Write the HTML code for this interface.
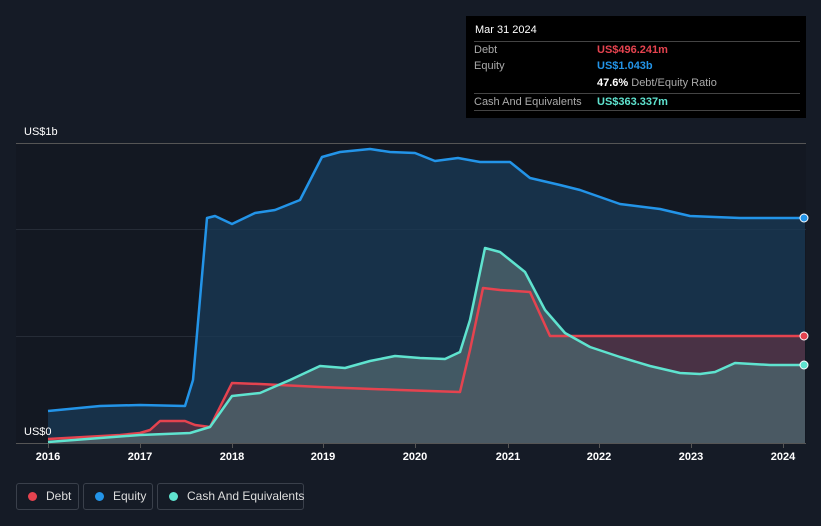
<!DOCTYPE html>
<html><head><style>
html,body{margin:0;width:821px;height:526px;overflow:hidden}
body{background:#151b26;font-family:"Liberation Sans",sans-serif;position:relative}
.tip{position:absolute;left:466px;top:16px;width:340px;height:102px;background:#000;color:#fff;font-size:11px}
.row{position:absolute;left:8px;right:6px;border-top:1px solid #444;height:17px;line-height:17px}
.lbl{color:#aaa}
.val{position:absolute;left:123px;top:0;font-weight:bold}
.leg{position:absolute;top:483px;height:27px;border:1px solid #3a404b;border-radius:3px;color:#ddd;font-size:12px;line-height:25px;box-sizing:border-box;white-space:nowrap}
.dot{display:inline-block;width:9px;height:9px;border-radius:50%;margin:0 9px 0 11px;vertical-align:-1px}
</style></head><body>
<svg width="821" height="526" style="position:absolute;left:0;top:0">
<rect x="16" y="143" width="790" height="300" fill="#131822"/>
<line x1="16" y1="143.5" x2="806" y2="143.5" stroke="#555" stroke-width="1"/>
<line x1="16" y1="229.5" x2="806" y2="229.5" stroke="#262c37"/>
<line x1="16" y1="336.5" x2="806" y2="336.5" stroke="#262c37"/>
<line x1="16" y1="443.5" x2="806" y2="443.5" stroke="#555"/>
<g stroke="#555"><line x1="48.5" y1="443" x2="48.5" y2="448"/><line x1="140.5" y1="443" x2="140.5" y2="448"/><line x1="232.5" y1="443" x2="232.5" y2="448"/><line x1="323.5" y1="443" x2="323.5" y2="448"/><line x1="415.5" y1="443" x2="415.5" y2="448"/><line x1="508.5" y1="443" x2="508.5" y2="448"/><line x1="599.5" y1="443" x2="599.5" y2="448"/><line x1="691.5" y1="443" x2="691.5" y2="448"/><line x1="783.5" y1="443" x2="783.5" y2="448"/></g>
<polygon fill="#1a3a57" fill-opacity="0.75" points="48,411 100,406 140,405 185,406 193,380 207,218 215,216 232,224 255,213 275,210 300,200 322,157 340,152 370,149 390,152 415,153 435,161 458,158 480,162 510,162 530,178 560,185 580,190 620,204 660,209 690,216 740,218 805,218 805,443 48,443"/>
<polygon fill="#6b3442" fill-opacity="0.6" points="48,439 120,435 140,433 150,430 160,421 185,421 195,425 210,427 232,383 260,384 320,387 400,390 460,392 470,350 483,288 500,290 530,292 550,336 600,336 805,336 805,443 48,443"/>
<polygon fill="#4a6068" fill-opacity="0.85" points="48,442 140,435 190,433 210,427 232,396 260,393 290,380 320,366 345,368 370,361 395,356 420,358 445,359 460,352 470,320 485,248 500,252 525,272 545,310 565,333 590,347 620,357 650,366 680,373 700,374 715,372 735,363 770,365 805,365 805,443 48,443"/>
<polyline fill="none" stroke="#2394e8" stroke-width="2.5" stroke-linejoin="round" points="48,411 100,406 140,405 185,406 193,380 207,218 215,216 232,224 255,213 275,210 300,200 322,157 340,152 370,149 390,152 415,153 435,161 458,158 480,162 510,162 530,178 560,185 580,190 620,204 660,209 690,216 740,218 805,218"/>
<polyline fill="none" stroke="#e5434f" stroke-width="2.5" stroke-linejoin="round" points="48,439 120,435 140,433 150,430 160,421 185,421 195,425 210,427 232,383 260,384 320,387 400,390 460,392 470,350 483,288 500,290 530,292 550,336 600,336 805,336"/>
<polyline fill="none" stroke="#5fe3cf" stroke-width="2.5" stroke-linejoin="round" points="48,442 140,435 190,433 210,427 232,396 260,393 290,380 320,366 345,368 370,361 395,356 420,358 445,359 460,352 470,320 485,248 500,252 525,272 545,310 565,333 590,347 620,357 650,366 680,373 700,374 715,372 735,363 770,365 805,365"/>
<circle cx="804" cy="218" r="4" fill="#2394e8" stroke="#fff" stroke-width="1"/>
<circle cx="804" cy="336" r="4" fill="#e5434f" stroke="#fff" stroke-width="1"/>
<circle cx="804" cy="365" r="4" fill="#5fe3cf" stroke="#fff" stroke-width="1"/>
<g fill="#fff" font-size="11" font-family="Liberation Sans"><text x="24" y="135">US$1b</text><text x="24" y="435">US$0</text></g>
<g fill="#fff" font-size="11" font-weight="bold" text-anchor="middle" font-family="Liberation Sans"><text x="48" y="460">2016</text><text x="140" y="460">2017</text><text x="232" y="460">2018</text><text x="323" y="460">2019</text><text x="415" y="460">2020</text><text x="508" y="460">2021</text><text x="599" y="460">2022</text><text x="691" y="460">2023</text><text x="783" y="460">2024</text></g>
</svg>
<div class="tip">
<div style="position:absolute;left:9px;top:8px;font-size:11px">Mar 31 2024</div>
<div class="row" style="top:25px"><span class="lbl">Debt</span><span class="val" style="color:#e5434f">US$496.241m</span></div>
<div class="row" style="top:42px;border:none"><span class="lbl">Equity</span><span class="val" style="color:#2394e8">US$1.043b</span></div>
<div class="row" style="top:59px;border:none"><span class="val">47.6% <span style="color:#aaa;font-weight:normal">Debt/Equity Ratio</span></span></div>
<div class="row" style="top:77px"><span class="lbl">Cash And Equivalents</span><span class="val" style="color:#5fe3cf">US$363.337m</span></div>
<div class="row" style="top:94px;height:0"></div>
</div>
<div class="leg" style="left:16px;width:63px"><span class="dot" style="background:#e5434f"></span>Debt</div>
<div class="leg" style="left:83px;width:70px"><span class="dot" style="background:#2394e8"></span>Equity</div>
<div class="leg" style="left:157px;width:147px"><span class="dot" style="background:#5fe3cf"></span>Cash And Equivalents</div>
</body></html>
